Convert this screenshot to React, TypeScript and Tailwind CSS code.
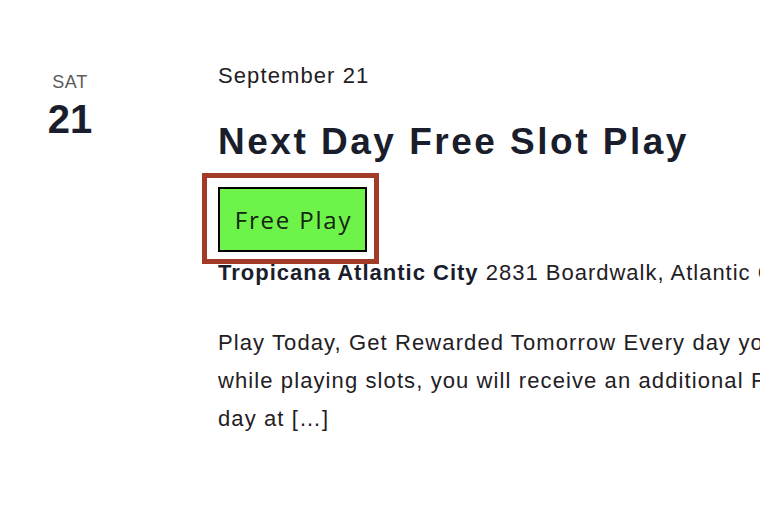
export default function App() {
  return (
    <div className="w-[760px] h-[514px] overflow-hidden bg-white font-['Liberation_Sans',Arial,sans-serif] text-[#1f2024]">
      <div className="flex pt-[63px]">
        {/* date column */}
        <div className="w-[140px] shrink-0 flex flex-col items-center pt-[8px]">
          <span className="text-[18px] leading-[22px] tracking-[0.6px] text-[#5b5b5b]">SAT</span>
          <span className="mt-[6px] text-[40px] leading-[40px] font-bold text-[#1a1e2c]">21</span>
        </div>

        {/* event content */}
        <div className="ml-[78px] w-[640px] shrink-0">
          <div className="text-[22px] leading-[26px] tracking-[1.1px]">September 21</div>
          <h2 className="mt-[31px] text-[37px] leading-[44px] font-bold tracking-[2.5px] text-[#1a1e2c] whitespace-nowrap">
            Next Day Free Slot Play
          </h2>
          <div className="mt-[23px] relative inline-block">
            <span className="absolute -left-[16px] -top-[14px] -right-[12px] -bottom-[12px] border-[5px] border-[#a23a28] pointer-events-none" />
            <button className="block w-[149px] h-[65px] border-2 border-black bg-[#6ef34b] text-[24px] text-[#13240f] font-['Open_Sans',sans-serif] tracking-[1.8px] pl-[2px]">
              Free Play
            </button>
          </div>
          <div className="mt-[8px] text-[22px] leading-[26px] tracking-[1px] whitespace-nowrap">
            <span className="font-bold text-[#1a1e2c]">Tropicana Atlantic City</span> 2831 Boardwalk, Atlantic City, NJ 08401
          </div>
          <div className="mt-[38px] text-[22px] leading-[38px] tracking-[1.1px] whitespace-nowrap">
            <div>Play Today, Get Rewarded Tomorrow Every day you earn</div>
            <div>while playing slots, you will receive an additional Free Slot Play the next</div>
            <div>day at […]</div>
          </div>
        </div>
      </div>
    </div>
  );
}
